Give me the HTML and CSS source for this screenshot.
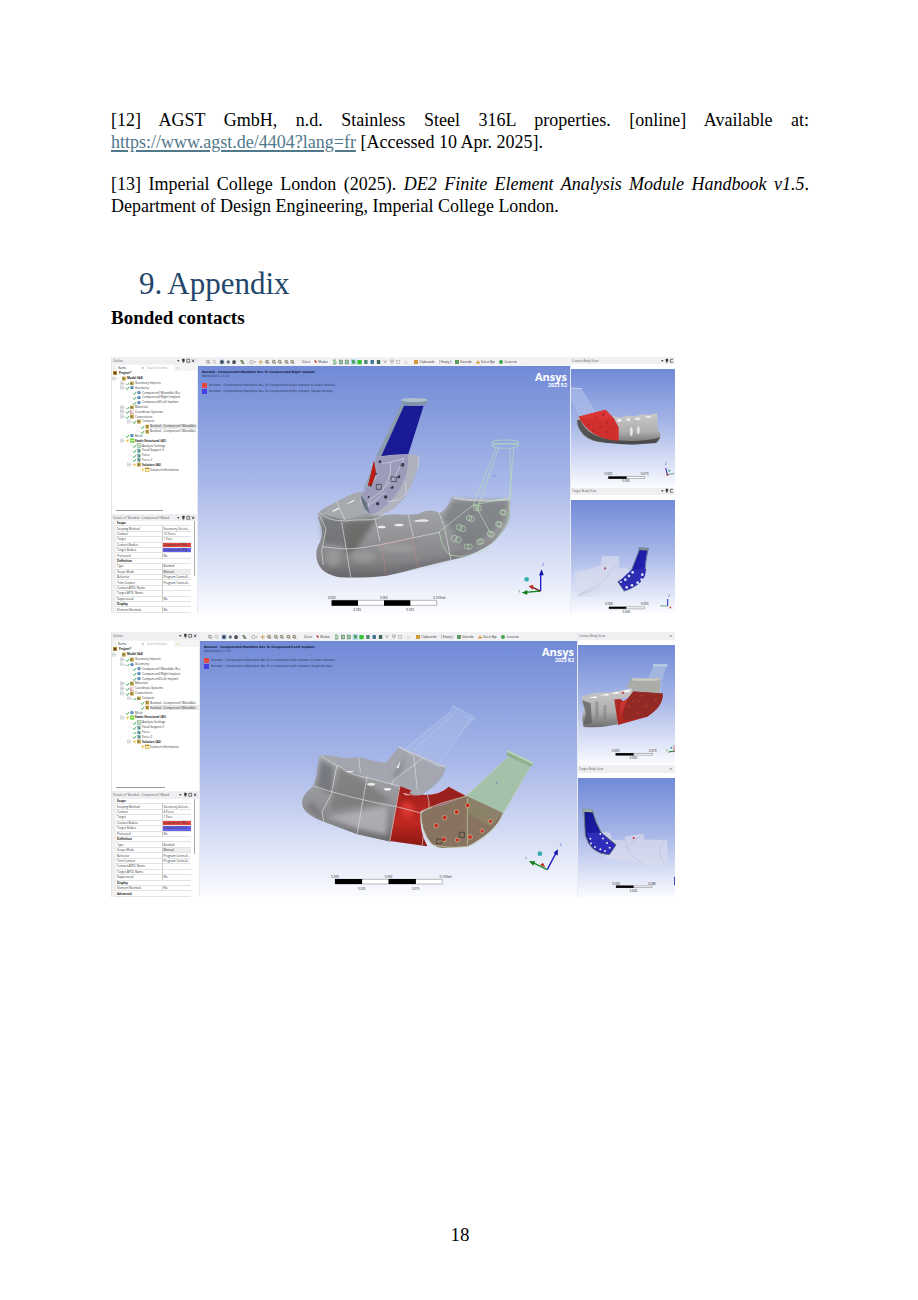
FILE: index.html
```html
<!DOCTYPE html>
<html lang="en">
<head>
<meta charset="utf-8">
<title>Appendix</title>
<link rel="stylesheet" href="styles.css">
</head>
<body>
<svg class="defs" aria-hidden="true">
  <defs>
    <linearGradient id="bone" x1="0" y1="0" x2="0" y2="1"><stop offset="0" stop-color="#a9abb0"/><stop offset=".45" stop-color="#97989b"/><stop offset=".8" stop-color="#858588"/><stop offset="1" stop-color="#68686b"/></linearGradient>
    <linearGradient id="boneLight" x1="0" y1="0" x2="0" y2="1"><stop offset="0" stop-color="#c9cac9"/><stop offset=".6" stop-color="#adadad"/><stop offset="1" stop-color="#6e6e6e"/></linearGradient>
    <linearGradient id="red" x1="0" y1="0" x2="0" y2="1"><stop offset="0" stop-color="#9d1f1b"/><stop offset=".6" stop-color="#c02822"/><stop offset="1" stop-color="#8a1713"/></linearGradient>
    <linearGradient id="blue" x1="0" y1="0" x2="1" y2="1"><stop offset="0" stop-color="#15158c"/><stop offset="1" stop-color="#2626c4"/></linearGradient>
    <filter id="soft" x="-50%" y="-50%" width="200%" height="200%"><feGaussianBlur stdDeviation="7"/></filter>
    <filter id="glow" x="-50%" y="-50%" width="200%" height="200%"><feGaussianBlur stdDeviation="2"/></filter>
    <symbol id="plus" viewBox="0 0 15 5" overflow="visible"><path d="M4 2.5h3M2 -1v2M2 4v2" stroke="#ccc" stroke-width=".4"/><rect x=".6" y="1" width="3" height="3" fill="#fff" stroke="#a5abb2" stroke-width=".4"/><path d="M1.2 2.5h1.8M2.1 1.6v1.8" stroke="#777" stroke-width=".4"/></symbol>
    <symbol id="minus" viewBox="0 0 15 5" overflow="visible"><path d="M4 2.5h3M2 -1v2M2 4v2" stroke="#ccc" stroke-width=".4"/><rect x=".6" y="1" width="3" height="3" fill="#fff" stroke="#a5abb2" stroke-width=".4"/><path d="M1.2 2.5h1.8" stroke="#777" stroke-width=".4"/></symbol>
    <symbol id="check" viewBox="0 0 15 5" overflow="visible"><path d="M2 -1v3.500h3" fill="none" stroke="#d5d5d5" stroke-width=".3"/><path d="M6 3.300l1.200 1.200 2-2.600" fill="none" stroke="#2fa44a" stroke-width=".9"/></symbol>
    <symbol id="bolt" viewBox="0 0 15 5"><path d="M8.300 .8L6.200 3h1.400L7 5l2.300-2.600H8z" fill="#f0b51f"/></symbol>
    <symbol id="box" viewBox="0 0 15 5"><rect x="10" y=".6" width="4" height="4" fill="#c9a94f"/><path d="M10.800 1.400h2v2.200h-2z" fill="#6c7746"/><path d="M13 .6v4" stroke="#f1d38a" stroke-width=".6"/></symbol>
    <symbol id="solid" viewBox="0 0 15 5"><circle cx="12" cy="2.500" r="1.700" fill="#4b83b3"/><path d="M11 2h2" stroke="#b5d2ea" stroke-width=".6"/></symbol>
    <symbol id="axes" viewBox="0 0 15 5"><path d="M10.300 .8v3.500h3.600M10.500 4l3-3" fill="none" stroke="#b04c6b" stroke-width=".6"/></symbol>
    <symbol id="contact" viewBox="0 0 15 5"><rect x="10.500" y=".6" width="3.500" height="4" fill="#e7bd50"/><path d="M10.800 1l2.800 3.200M13.600 1l-2.800 3.200" stroke="#47402a" stroke-width=".6"/></symbol>
    <symbol id="static" viewBox="0 0 15 5"><rect x="10" y=".5" width="4.400" height="4.200" fill="#72d63d"/><path d="M10.500 2.500h3.400" stroke="#e9ffdd" stroke-width=".8"/></symbol>
    <symbol id="load" viewBox="0 0 15 5"><rect x="10.200" y=".7" width="3.600" height="3.800" fill="#9cc9b2"/><path d="M10.500 1l2 2.400M12.500 2v2h-1.600" fill="none" stroke="#2f5c86" stroke-width=".7"/></symbol>
    <symbol id="gear" viewBox="0 0 15 5"><rect x="10.200" y=".7" width="3.800" height="3.800" fill="#edf6ed" stroke="#6a9c76" stroke-width=".5"/><path d="M10.200 2.600h3.800M12.100 .7v3.800" stroke="#6a9c76" stroke-width=".4"/></symbol>
    <symbol id="info" viewBox="0 0 15 5"><rect x="10.200" y=".9" width="3.800" height="3.600" fill="#fff3bf" stroke="#c59b22" stroke-width=".6"/><path d="M10.200 1.500h3.800" stroke="#8e6a0e" stroke-width=".7"/></symbol>
    <symbol id="winctl" viewBox="0 0 18 6"><path d="M0 2.300h2.600L1.300 3.800z" fill="#222"/><path d="M5.500 1h1.800v2.400h-1.800zM6.400 3.400v1.800" fill="#444" stroke="#222" stroke-width=".5"/><path d="M9.800 1.300h2.800v3h-2.800z" fill="none" stroke="#222" stroke-width=".6"/><path d="M15 1.500l2.300 2.600M17.300 1.500L15 4.100" stroke="#222" stroke-width=".7"/></symbol>
    <symbol id="pinctl" viewBox="0 0 12 6"><path d="M0 2.300h2.600L1.300 3.800z" fill="#222"/><path d="M5 1h1.800v2.400h-1.800zM5.900 3.400v1.800" fill="#444" stroke="#222" stroke-width=".5"/><path d="M12 1.300H9.500v3H12" fill="none" stroke="#222" stroke-width=".6"/></symbol>
    <symbol id="strip1" viewBox="0 0 96 6">
      <g fill="none" stroke="#66615b" stroke-width=".7"><circle cx="3" cy="2.600" r="1.500"/><path d="M4 3.600l1.300 1.300"/><circle cx="9.500" cy="2.600" r="1.500" stroke="#aaa"/><path d="M10.500 3.600l1.300 1.300" stroke="#aaa"/></g>
      <rect x="14.500" y="0" width="6" height="6" fill="#cfe2f5"/><circle cx="17.500" cy="3" r="2" fill="#3d4b5e"/><circle cx="24" cy="3" r="1.700" fill="#68717b"/><path d="M28 2l2-1 2 1-.5 3h-3z" fill="#4d5258"/><path d="M36 1h3l2 4h-3z" fill="#7f9c8d"/><path d="M37 2l3 2" stroke="#a06e27" stroke-width=".7"/><path d="M34 0v6M44 0v6" stroke="#ccc" stroke-width=".3"/>
      <circle cx="48" cy="3" r="1.800" fill="none" stroke="#888" stroke-width=".6"/><path d="M51 3h1" stroke="#555"/><path d="M57.500 .8v4.400M55.300 3h4.400" stroke="#c49b3a" stroke-width=".8"/>
      <g fill="#dcd3b9" stroke="#5b5549" stroke-width=".7"><circle cx="64" cy="2.700" r="1.500"/><circle cx="71" cy="2.700" r="1.500"/><circle cx="77" cy="2.700" r="1.500"/><circle cx="84" cy="2.700" r="1.500"/><circle cx="90" cy="2.700" r="1.500"/><path d="M65 3.700l1.200 1.300M72 3.700l1.200 1.300M78 3.700l1.200 1.300M85 3.700l1.200 1.300M91 3.700l1.200 1.300"/></g>
    </symbol>
    <symbol id="strip2" viewBox="0 0 80 6">
      <path d="M1 1h3M1 5h3M2 1v4M4 2v3" stroke="#489b5a" stroke-width=".8"/>
      <g fill="#9dc6a5" stroke="#4b6f59" stroke-width=".5"><rect x="7.500" y="1" width="3.500" height="4"/><rect x="13.500" y="1" width="3.500" height="4"/></g>
      <rect x="19" y="0" width="6" height="6" fill="#b9dcf1"/><path d="M20 1h3l1 3-3 1z" fill="#50a165"/><rect x="26" y="1" width="4.500" height="4.300" fill="#31c332"/>
      <rect x="33" y="1" width="3.500" height="4" fill="#4f8772"/><rect x="39.500" y="1" width="3.500" height="4" fill="#3f7092"/><rect x="46" y="1" width="3.500" height="4" fill="#3c6955"/>
      <path d="M53 1l1.500 3L56 1M60 1h3v2h-3zM61.500 3v2" fill="none" stroke="#999" stroke-width=".7"/><rect x="66" y="1.500" width="3.500" height="3" fill="none" stroke="#aaa" stroke-width=".6"/><path d="M74 4h4M75 3l2-1" stroke="#bbb" stroke-width=".6"/>
    </symbol>
  </defs>
</svg>

<main class="page">
  <section class="references">
    <p class="spread">[12] AGST GmbH, n.d. Stainless Steel 316L properties. [online] Available at:</p>
    <p><a href="https://www.agst.de/4404?lang=fr">https://www.agst.de/4404?lang=fr</a> [Accessed 10 Apr. 2025].</p>
    <p class="entry">[13] Imperial College London (2025). <em>DE2 Finite Element Analysis Module Handbook v1.5</em>. Department of Design Engineering, Imperial College London.</p>
  </section>

  <h1><span>9.</span><span>Appendix</span></h1>
  <h2>Bonded contacts</h2>

  <figure class="shot shot-right">
    <aside class="side">
      <header class="bar"><span>Outline</span><svg class="winctl"><use href="#winctl"/></svg></header>
      <div class="search"><select aria-label="Filter"><option>Name</option></select><span class="caret">▾</span><input aria-label="Search outline" placeholder="Search Outline"><span class="funnel">▾ .</span></div>
      <ul class="tree">
        <li class="root"><svg class="ti0"><rect x="1" y="0" width="4" height="4" fill="#b6862d"/><rect x="2" y="1" width="2" height="2" fill="#5d4a22"/></svg><b>Project*</b></li>
        <li><svg class="ti"><use href="#minus"/><use href="#box"/></svg><b>Model (A4)</b></li>
        <li class="d2"><svg class="ti"><use href="#plus"/><use href="#check"/><use href="#box"/></svg>Geometry Imports</li>
        <li class="d2"><svg class="ti"><use href="#minus"/><use href="#check"/><use href="#solid"/></svg>Geometry</li>
        <li class="d3"><svg class="ti"><use href="#check"/><use href="#solid"/></svg>Component1\Mandible Res</li>
        <li class="d3"><svg class="ti"><use href="#check"/><use href="#solid"/></svg>Component2\Right Implant</li>
        <li class="d3"><svg class="ti"><use href="#check"/><use href="#solid"/></svg>Component3\Left Implant</li>
        <li class="d2"><svg class="ti"><use href="#plus"/><use href="#check"/><use href="#box"/></svg>Materials</li>
        <li class="d2"><svg class="ti"><use href="#plus"/><use href="#check"/><use href="#axes"/></svg>Coordinate Systems</li>
        <li class="d2"><svg class="ti"><use href="#minus"/><use href="#check"/><use href="#box"/></svg>Connections</li>
        <li class="d3"><svg class="ti"><use href="#minus"/><use href="#check"/><use href="#box"/></svg>Contacts</li>
        <li class="d4 picked"><svg class="ti"><use href="#check"/><use href="#contact"/></svg>Bonded - Component1\Mandible</li>
        <li class="d4"><svg class="ti"><use href="#check"/><use href="#contact"/></svg>Bonded - Component1\Mandible</li>
        <li class="d2"><svg class="ti"><use href="#check"/><use href="#solid"/></svg>Mesh</li>
        <li class="d2"><svg class="ti"><use href="#minus"/><use href="#bolt"/><use href="#static"/></svg><b>Static Structural (A5)</b></li>
        <li class="d3"><svg class="ti"><use href="#check"/><use href="#gear"/></svg>Analysis Settings</li>
        <li class="d3"><svg class="ti"><use href="#check"/><use href="#load"/></svg>Fixed Support 2</li>
        <li class="d3"><svg class="ti"><use href="#check"/><use href="#load"/></svg>Force</li>
        <li class="d3"><svg class="ti"><use href="#check"/><use href="#load"/></svg>Force 2</li>
        <li class="d3"><svg class="ti"><use href="#minus"/><use href="#bolt"/><use href="#box"/></svg><b>Solution (A6)</b></li>
        <li class="d4"><svg class="ti"><use href="#bolt"/><use href="#info"/></svg>Solution Information</li>
      </ul>
      <div class="scroll"></div>
      <header class="bar"><span>Details of "Bonded - Component1\Mand</span><svg class="winctl"><use href="#winctl"/></svg></header>
      <div class="details">
        <table>
          <colgroup><col class="label"><col></colgroup>
          <tr><th colspan="2">Scope</th></tr>
          <tr><td>Scoping Method</td><td>Geometry Selecti...</td></tr>
          <tr><td>Contact</td><td>12 Faces</td></tr>
          <tr><td>Target</td><td>1 Face</td></tr>
          <tr><td>Contact Bodies</td><td class="hot">Component1\Ma...</td></tr>
          <tr><td>Target Bodies</td><td class="cold">Component2\Rig...</td></tr>
          <tr><td>Protected</td><td>No</td></tr>
          <tr><th colspan="2">Definition</th></tr>
          <tr><td>Type</td><td>Bonded</td></tr>
          <tr><td>Scope Mode</td><td class="dim">Manual</td></tr>
          <tr><td>Behavior</td><td>Program Controll...</td></tr>
          <tr><td>Trim Contact</td><td>Program Controll...</td></tr>
          <tr><td>Contact APDL Name</td><td></td></tr>
          <tr><td>Target APDL Name</td><td></td></tr>
          <tr><td>Suppressed</td><td>No</td></tr>
          <tr><th colspan="2">Display</th></tr>
          <tr><td>Element Normals</td><td>No</td></tr>
        </table>
        <div class="thumb"></div>
      </div>
    </aside>

    <div class="centre">
      <div class="tools"><svg class="strip1"><use href="#strip1"/></svg><button>Select</button><button><i class="arrow"></i>Mode▾</button><svg class="strip2"><use href="#strip2"/></svg><button><i class="clip"></i>Clipboard▾</button><button>[ Empty ]</button><button><i class="ext"></i>Extend▾</button><button><i class="sel"></i>Select By▾</button><button><i class="conv"></i>Convert▾</button><span>.</span></div>
      <div class="view">
        <svg class="scene" viewBox="198 366 372 247" preserveAspectRatio="none">
          <g transform="translate(300 385) scale(.33333)">
            <path d="M55 385C50 400 65 420 66 440C68 470 48 480 49 510C50 545 70 565 110 575C150 580 210 578 260 572C330 558 400 535 453 525C510 515 560 490 590 462C615 435 630 410 630 385L629 340C580 345 500 345 458 334C448 355 440 375 418 385C400 372 375 375 360 385C330 395 290 382 245 392L205 385L182 350L190 320C160 320 140 335 120 345C90 360 60 375 55 385Z" fill="url(#bone)"/>
            <g filter="url(#soft)"><path d="M72 550C150 575 270 565 450 520L580 460L450 515L250 560L150 565Z" fill="#5b5b5e" opacity=".65"/><path d="M62 395L125 400L135 480L70 475Z" fill="#606267" opacity=".6"/><path d="M130 410L230 400L170 490L135 510Z" fill="#5e5d57" opacity=".7"/><ellipse cx="100" cy="520" rx="22" ry="26" fill="#b2b2b2" opacity=".4"/><ellipse cx="190" cy="515" rx="35" ry="18" fill="#afafaf" opacity=".4"/><ellipse cx="290" cy="490" rx="60" ry="12" fill="#b3b3b3" opacity=".4"/><path d="M430 400L460 345L625 345L610 410L500 500Z" fill="#727478" opacity=".6"/></g>
            <path d="M65 385C95 360 135 330 190 324L182 350L205 385L135 405Z" fill="#a6a9ad"/>
            <g fill="#fff" filter="url(#glow)" opacity=".8"><path d="M140 356l25-14-5 8-20 8zM95 378l20-10 5 3-20 9z"/><ellipse cx="245" cy="426" rx="12" ry="4"/><ellipse cx="297" cy="420" rx="14" ry="4"/><path d="M340 408q28-10 48-2l-8 4h-34zM180 350l8-16-2 18z"/></g>
            <path d="M58 382C90 410 110 405 135 408C180 400 230 412 245 392M66 485L135 492C220 490 320 460 420 442M125 412L140 500L152 577M58 390L78 430L65 500L70 540M225 400L240 470M325 390L340 455M418 385C425 405 436 430 438 450L453 525M110 350L135 405" fill="none" stroke="#dedede" stroke-width="2"/>
            <path d="M240 480L335 458L355 548M245 480L258 570" fill="none" stroke="#e08b88" stroke-width="2" stroke-dasharray="4 3"/>
            <path d="M458 334C500 345 590 346 629 338L629 346C580 352 500 350 462 342Z" fill="#c4c7cc"/>
            <path d="M305 58L316 64L243 215L228 215Z" fill="#8d9cac"/>
            <path d="M312 62L371 62L325 207L243 215Z" fill="#1a1a95"/>
            <path d="M228 215L190 312L205 318L230 250L243 215Z" fill="#9aabbd"/>
            <path d="M222 228L228 265L216 300L204 302Z" fill="#b81e18"/>
            <path d="M228 217C270 208 320 204 357 212C357 240 350 270 318 332C290 370 250 398 210 390C185 378 178 350 183 330L205 310L228 270Z" fill="#b0b1bb" opacity=".94"/>
            <path d="M228 217L325 206C325 230 325 280 290 325C262 362 233 388 210 388C185 378 178 350 190 320L230 280Z" fill="#8f8cb8" opacity=".6"/>
            <path d="M222 228L228 265L216 300L204 302Z" fill="#b81e18"/>
            <path d="M247 235L271 232Q275 260 265 285L245 320L212 342L203 365Q215 355 255 322M271 232L313 220L302 240L285 275L258 305M315 290L320 325L295 345L260 350M182 350L205 385M357 212L354 250" fill="none" stroke="#d7d8e6" stroke-width="2"/>
            <path d="M183 330Q183 365 210 388L200 355Z" fill="#65767c"/>
            <g fill="#333846"><circle cx="307" cy="239" r="6"/><circle cx="296" cy="275" r="5"/><circle cx="276" cy="307" r="5"/><circle cx="257" cy="336" r="5"/><circle cx="233" cy="356" r="5"/><circle cx="206" cy="336" r="3"/><circle cx="240" cy="230" r="4"/><circle cx="228" cy="266" r="3"/><circle cx="212" cy="302" r="3"/></g>
            <g fill="#b7badb"><circle cx="304" cy="237" r="2"/><circle cx="293" cy="273" r="2"/><circle cx="273" cy="305" r="2"/></g>
            <path d="M229 298h15v15h-15zM273 276h16v14h-16z" fill="none" stroke="#333" stroke-width="2"/>
            <path d="M303 45Q340 34 383 43L379 57Q345 68 307 58Z" fill="#8094aa"/><ellipse cx="343" cy="45" rx="40" ry="6" fill="#aebfd0"/>
            <g fill="none" stroke="#b9deb6" stroke-width="2"><path d="M588 188L520 360L418 440Q425 490 450 510Q510 525 565 488Q620 435 628 385L628 338L642 188M520 360L532 372L572 445M595 190L533 370M630 190L633 345M520 360L628 338M577 170v15M655 170v15"/><ellipse cx="616" cy="171" rx="39" ry="6"/><ellipse cx="616" cy="183" rx="39" ry="7"/><circle cx="529" cy="369" r="8"/><circle cx="537" cy="370" r="8"/><circle cx="507" cy="399" r="8"/><circle cx="515" cy="402" r="8"/><circle cx="478" cy="427" r="9"/><circle cx="488" cy="431" r="9"/><circle cx="463" cy="460" r="9"/><circle cx="475" cy="464" r="9"/><circle cx="500" cy="485" r="8"/><circle cx="509" cy="485" r="8"/><circle cx="538" cy="471" r="8"/><circle cx="544" cy="469" r="8"/><circle cx="570" cy="446" r="8"/><circle cx="575" cy="449" r="8"/><circle cx="595" cy="417" r="8"/><circle cx="599" cy="419" r="8"/><circle cx="607" cy="382" r="8"/><circle cx="612" cy="383" r="8"/></g>
            <path d="M583 268v8M579 272h8" stroke="#6c76d7" stroke-width="1"/>
            <path d="M722 618V568" stroke="#1b1bc8" stroke-width="4"/><path d="M717 571L725 553L731 571Z" fill="#1212b0"/><path d="M722 618L676 622" stroke="#168a21" stroke-width="4"/><path d="M682 615L665 623L682 629Z" fill="#117b18"/><path d="M721 618L698 607" stroke="#6b1512" stroke-width="4"/><path d="M686 603L700 600L698 614Z" fill="#c22019"/><circle cx="680" cy="583" r="7" fill="#36aeb1"/>
            <path d="M95 646H410V661H95Z" fill="#fff" stroke="#333"/><path d="M95 646h79v16H95zM252 646h79v16h-79z"/>
            <g class="ticks"><text x="95" y="643">0.000</text><text x="252" y="643">0.050</text><text x="418" y="643">0.100(m)</text><text x="172" y="679">0.025</text><text x="331" y="679">0.075</text><text x="729" y="543" fill="#4545dd">Z</text><text x="658" y="625" fill="#1b861d">Y</text></g>
          </g>
        </svg>
        <div class="caption"><b>Bonded - Component1\Mandible Res To Component2\Right Implant</b><span>06/06/2025 17:24</span></div>
        <div class="legend"><span><i class="hot"></i>Bonded - Component1\Mandible Res To Component2\Right Implant (Contact Bodies)</span><span><i class="cold"></i>Bonded - Component1\Mandible Res To Component2\Right Implant (Target Bodies)</span></div>
        <div class="brand"><strong>Ansys</strong><b>2023 R2</b></div>
      </div>
    </div>

    <div class="bodies">
      <header class="bar"><span>Contact Body View</span><svg class="pinctl"><use href="#pinctl"/></svg></header>
      <div class="view">
        <svg class="scene" viewBox="571 369 104 118" preserveAspectRatio="none"><g transform="translate(566 352) scale(.33333)">
          <path d="M15 108L48 112L90 180L40 194L15 145Z" fill="#adbfe9" opacity=".65"/><path d="M15 108L48 110" stroke="#c5d5f0" stroke-width="3"/>
          <path d="M35 200C30 235 60 270 110 268L170 276L270 272C285 265 288 240 275 235L274 183L250 188L225 187L205 193L185 190L165 196L143 192L40 195Z" fill="url(#boneLight)"/><path d="M33 203C35 245 70 265 120 272L200 277L270 272L283 255Q220 272 150 263Q65 258 43 202Z" fill="#404040" opacity=".8" filter="url(#glow)"/>
          <g fill="#f5f5f5" filter="url(#glow)" opacity=".8"><ellipse cx="160" cy="204" rx="7" ry="5"/><ellipse cx="187" cy="202" rx="6" ry="5"/><ellipse cx="215" cy="200" rx="8" ry="4"/><ellipse cx="247" cy="194" rx="9" ry="3"/><ellipse cx="196" cy="238" rx="4" ry="14"/><ellipse cx="217" cy="234" rx="4" ry="12"/></g>
          <path d="M38 194L119 173Q128 193 143 197L158 226L158 266Q70 260 38 194Z" fill="#cf2f2d"/><path d="M39 193L119 173L141 195Q110 210 38 194Z" fill="#d83533"/><g fill="#b02427"><circle cx="112" cy="187" r="4"/><circle cx="88" cy="196" r="3"/><circle cx="124" cy="211" r="3"/><circle cx="68" cy="218" r="3"/><circle cx="104" cy="224" r="3"/><circle cx="82" cy="236" r="3"/><circle cx="123" cy="240" r="3"/><circle cx="142" cy="228" r="3"/></g>
          <path d="M127 372H236V378H127Z" fill="#fff" stroke="#333"/><path d="M127 372h55v7h-55z"/><g class="ticks"><text x="127" y="369">0.000</text><text x="236" y="369">0.070</text><text x="180" y="389">0.035</text><text x="299" y="339" fill="#4545dd">Z</text></g>
          <path d="M304 366L299 347" stroke="#2424b8" stroke-width="3"/><path d="M304 367L325 363" stroke="#397b6d" stroke-width="2"/><circle cx="304" cy="367" r="3" fill="#b33"/><circle cx="310" cy="355" r="3" fill="#2b9f9c"/>
        </g></svg>
      </div>
      <header class="bar"><span>Target Body View</span><svg class="pinctl"><use href="#pinctl"/></svg></header>
      <div class="view">
        <svg class="scene" viewBox="571 500 104 113" preserveAspectRatio="none"><g transform="translate(566 352) scale(.33333)">
          <path d="M27 660L60 653L103 640L108 612L158 611Q165 630 155 650L180 646L190 655L175 700L90 730Q45 740 28 720Z" fill="#d9ddec" opacity=".7"/><path d="M158 630L108 690L35 730Q70 720 105 700" fill="none" stroke="#bcc3d3" stroke-width="2"/>
          <path d="M221 590L246 592Q238 630 237 660Q225 700 175 716L156 688L190 670Z" fill="url(#blue)" stroke="#6e8099" stroke-width="3"/><path d="M195 654Q220 647 240 650L237 670Q225 700 175 714L157 689Z" fill="#2d2db4"/><path d="M219 586L248 588L246 595L220 593Z" fill="#829098" stroke="#4d5962"/>
          <g fill="#e1e3fa"><circle cx="200" cy="660" r="4"/><circle cx="229" cy="667" r="4"/><circle cx="189" cy="671" r="4"/><circle cx="178" cy="682" r="4"/><circle cx="227" cy="682" r="4"/><circle cx="215" cy="691" r="4"/><circle cx="198" cy="699" r="4"/><circle cx="182" cy="705" r="4"/><circle cx="165" cy="689" r="3"/></g><path d="M115 646h5v5h-5z" fill="#9d3446"/>
          <path d="M129 763H236V769H129Z" fill="#fff" stroke="#333"/><path d="M129 763h52v6h-52z"/><g class="ticks"><text x="129" y="759">0.000</text><text x="236" y="759">0.090</text><text x="181" y="781">0.045</text><text x="309" y="735" fill="#4545dd">Z</text></g><path d="M305 761V740" stroke="#2424b8" stroke-width="3"/><path d="M305 761L283 760" stroke="#287847" stroke-width="2"/><circle cx="313" cy="765" r="3" fill="#d44"/>
        </g></svg>
      </div>
    </div>
  </figure>

  <figure class="shot shot-left">
    <aside class="side">
      <header class="bar"><span>Outline</span><svg class="winctl"><use href="#winctl"/></svg></header>
      <div class="search"><select aria-label="Filter"><option>Name</option></select><span class="caret">▾</span><input aria-label="Search outline" placeholder="Search Outline"><span class="funnel">▾ .</span></div>
      <ul class="tree">
        <li class="root"><svg class="ti0"><rect x="1" y="0" width="4" height="4" fill="#b6862d"/><rect x="2" y="1" width="2" height="2" fill="#5d4a22"/></svg><b>Project*</b></li>
        <li><svg class="ti"><use href="#minus"/><use href="#box"/></svg><b>Model (A4)</b></li>
        <li class="d2"><svg class="ti"><use href="#plus"/><use href="#check"/><use href="#box"/></svg>Geometry Imports</li>
        <li class="d2"><svg class="ti"><use href="#minus"/><use href="#check"/><use href="#solid"/></svg>Geometry</li>
        <li class="d3"><svg class="ti"><use href="#check"/><use href="#solid"/></svg>Component1\Mandible Res</li>
        <li class="d3"><svg class="ti"><use href="#check"/><use href="#solid"/></svg>Component2\Right Implant</li>
        <li class="d3"><svg class="ti"><use href="#check"/><use href="#solid"/></svg>Component3\Left Implant</li>
        <li class="d2"><svg class="ti"><use href="#plus"/><use href="#check"/><use href="#box"/></svg>Materials</li>
        <li class="d2"><svg class="ti"><use href="#plus"/><use href="#check"/><use href="#axes"/></svg>Coordinate Systems</li>
        <li class="d2"><svg class="ti"><use href="#minus"/><use href="#check"/><use href="#box"/></svg>Connections</li>
        <li class="d3"><svg class="ti"><use href="#minus"/><use href="#check"/><use href="#box"/></svg>Contacts</li>
        <li class="d4"><svg class="ti"><use href="#check"/><use href="#contact"/></svg>Bonded - Component1\Mandible</li>
        <li class="d4 picked"><svg class="ti"><use href="#check"/><use href="#contact"/></svg>Bonded - Component1\Mandible</li>
        <li class="d2"><svg class="ti"><use href="#check"/><use href="#solid"/></svg>Mesh</li>
        <li class="d2"><svg class="ti"><use href="#minus"/><use href="#bolt"/><use href="#static"/></svg><b>Static Structural (A5)</b></li>
        <li class="d3"><svg class="ti"><use href="#check"/><use href="#gear"/></svg>Analysis Settings</li>
        <li class="d3"><svg class="ti"><use href="#check"/><use href="#load"/></svg>Fixed Support 2</li>
        <li class="d3"><svg class="ti"><use href="#check"/><use href="#load"/></svg>Force</li>
        <li class="d3"><svg class="ti"><use href="#check"/><use href="#load"/></svg>Force 2</li>
        <li class="d3"><svg class="ti"><use href="#minus"/><use href="#bolt"/><use href="#box"/></svg><b>Solution (A6)</b></li>
        <li class="d4"><svg class="ti"><use href="#bolt"/><use href="#info"/></svg>Solution Information</li>
      </ul>
      <div class="scroll"></div>
      <header class="bar"><span>Details of "Bonded - Component1\Mand</span><svg class="winctl"><use href="#winctl"/></svg></header>
      <div class="details">
        <table>
          <colgroup><col class="label"><col></colgroup>
          <tr><th colspan="2">Scope</th></tr>
          <tr><td>Scoping Method</td><td>Geometry Selecti...</td></tr>
          <tr><td>Contact</td><td>4 Faces</td></tr>
          <tr><td>Target</td><td>1 Face</td></tr>
          <tr><td>Contact Bodies</td><td class="hot">Component1\Ma...</td></tr>
          <tr><td>Target Bodies</td><td class="cold">Component3\Lef...</td></tr>
          <tr><td>Protected</td><td>No</td></tr>
          <tr><th colspan="2">Definition</th></tr>
          <tr><td>Type</td><td>Bonded</td></tr>
          <tr><td>Scope Mode</td><td class="dim">Manual</td></tr>
          <tr><td>Behavior</td><td>Program Controll...</td></tr>
          <tr><td>Trim Contact</td><td>Program Controll...</td></tr>
          <tr><td>Contact APDL Name</td><td></td></tr>
          <tr><td>Target APDL Name</td><td></td></tr>
          <tr><td>Suppressed</td><td>No</td></tr>
          <tr><th colspan="2">Display</th></tr>
          <tr><td>Element Normals</td><td>No</td></tr>
          <tr><th colspan="2">Advanced</th></tr>
        </table>
        <div class="thumb"></div>
      </div>
    </aside>

    <div class="centre">
      <div class="tools"><svg class="strip1"><use href="#strip1"/></svg><button>Select</button><button><i class="arrow"></i>Mode▾</button><svg class="strip2"><use href="#strip2"/></svg><button><i class="clip"></i>Clipboard▾</button><button>[ Empty ]</button><button><i class="ext"></i>Extend▾</button><button><i class="sel"></i>Select By▾</button><button><i class="conv"></i>Convert▾</button><span>.</span></div>
      <div class="view">
        <svg class="scene" viewBox="200 641 376 256" preserveAspectRatio="none">
          <g transform="translate(290 695) scale(.33333)">
            <path d="M482 48L345 160L440 200L550 72Z" fill="#a9b9e6" opacity=".5"/><path d="M482 48L345 160M492 54L370 165M540 72L445 205M485 32L557 68M480 42L550 76M484 36L554 72" stroke="#b4cbed" stroke-width="2"/>
            <path d="M325 156L466 217Q455 262 400 295L310 270L285 205Z" fill="#a4a7b0"/><path d="M325 156L466 217L440 215L370 180Z" fill="#b4b9c5"/>
            <path d="M85 185Q110 175 160 190L210 187Q250 200 290 204L325 158L355 172L310 240L300 270L180 245L120 220Z" fill="#a3a6ae"/>
            <path d="M92 180C75 195 90 250 62 280C20 315 25 350 95 378L200 418L300 440L328 275L260 258L180 240L150 210L120 190Z" fill="url(#bone)"/>
            <g filter="url(#soft)"><path d="M92 195L130 215L125 300L80 275Z" fill="#666970" opacity=".7"/><path d="M145 220L205 245L305 320L120 345Z" fill="#757574" opacity=".7"/><path d="M110 365L290 335L288 420L200 400Z" fill="#babbc0" opacity=".7"/><path d="M50 335L95 370L90 355L65 320Z" fill="#5d5f65" opacity=".5"/><path d="M305 240L345 185L340 215L320 250Z" fill="#6e7178" opacity=".5"/></g>
            <g fill="#fff" filter="url(#glow)" opacity=".85"><ellipse cx="242" cy="268" rx="12" ry="4"/><ellipse cx="291" cy="283" rx="11" ry="4"/><ellipse cx="178" cy="230" rx="12" ry="2"/><path d="M317 220l12-22-4 20z"/></g>
            <path d="M327 273Q360 285 400 300Q450 300 474 275L526 303L450 325L390 350Q385 405 410 454L298 438Z" fill="url(#red)"/><ellipse cx="350" cy="345" rx="20" ry="26" fill="#d8362d" filter="url(#soft)"/><path d="M336 293l28 6 28-7-8 9h-40z" fill="#fff" opacity=".6" filter="url(#glow)"/><ellipse cx="380" cy="292" rx="22" ry="9" fill="#a7aab1"/><path d="M405 304Q450 305 474 278L522 306L425 340Z" fill="#8f201c" opacity=".6"/>
            <path d="M92 182Q130 210 150 215Q175 240 240 250L328 274M68 273Q180 310 318 335L395 355M140 210L122 300L95 350L100 380M230 245L215 330L200 418M328 275L298 438M205 188L210 232M410 300Q425 330 400 400L395 450M325 156L370 182L380 283M305 260L395 190M325 156L466 217" fill="none" stroke="#dcdcdc" stroke-width="2"/>
            <path d="M654 185L718 215L637 355L527 303Z" fill="#a4c2aa"/><path d="M527 303L637 355Q615 410 530 455L455 459Q400 455 391 360Q390 345 450 332Z" fill="#87735f"/><path d="M527 303L637 355L600 395L533 355Z" fill="#8b8169"/><path d="M654 185L527 303L450 325L392 348Q385 400 425 450Q500 465 550 448Q615 410 637 355L718 215M530 310V450" fill="none" stroke="#bfd0a6" stroke-width="2"/>
            <path d="M650 168L726 205L720 216L648 181Z" fill="#8eb28c"/><path d="M650 168L726 205" stroke="#b8d8b4" stroke-width="5"/>
            <g fill="#c52b22" stroke="#cfc398" stroke-width="2"><circle cx="437" cy="392" r="7"/><circle cx="462" cy="368" r="7"/><circle cx="498" cy="351" r="7"/><circle cx="531" cy="331" r="7"/><circle cx="599" cy="379" r="6"/><circle cx="574" cy="408" r="6"/><circle cx="538" cy="426" r="7"/><circle cx="500" cy="435" r="6"/><circle cx="460" cy="433" r="7"/></g><path d="M438 432h16v14h-16zM506 412h15v15h-15z" fill="none" stroke="#333" stroke-width="2"/><path d="M615 264h6M618 260v8" stroke="#728cb8" stroke-width="2"/>
            <path d="M769 524L796 472" stroke="#1b1bc8" stroke-width="4"/><path d="M788 473L801 463L800 482Z" fill="#1212b0"/><path d="M769 524L726 503" stroke="#168a21" stroke-width="4"/><path d="M714 498L733 499L727 512Z" fill="#117b18"/><path d="M748 510L756 503L763 517Z" fill="#c22019"/><circle cx="747" cy="476" r="7" fill="#36aeb1"/>
            <path d="M134 553H455V567H134Z" fill="#fff" stroke="#333"/><path d="M134 552h81v15h-81zM294 552h82v15h-82z"/><g class="ticks"><text x="134" y="550">0.000</text><text x="294" y="550">0.050</text><text x="465" y="550">0.100(m)</text><text x="214" y="584">0.025</text><text x="375" y="584">0.075</text><text x="809" y="454" fill="#4545dd">Z</text><text x="706" y="495" fill="#1b861d">Y</text></g>
          </g>
        </svg>
        <div class="caption"><b>Bonded - Component1\Mandible Res To Component3\Left Implant</b><span>06/06/2025 17:25</span></div>
        <div class="legend"><span><i class="hot"></i>Bonded - Component1\Mandible Res To Component3\Left Implant (Contact Bodies)</span><span><i class="cold"></i>Bonded - Component1\Mandible Res To Component3\Left Implant (Target Bodies)</span></div>
        <div class="brand"><strong>Ansys</strong><b>2023 R2</b></div>
      </div>
    </div>

    <div class="bodies">
      <header class="bar"><span>Contact Body View</span><span class="down">▾</span></header>
      <div class="view">
        <svg class="scene" viewBox="578 645 97 119" preserveAspectRatio="none"><g transform="translate(572 628) scale(.33333)">
          <path d="M245 115L282 116L270 160L264 198L225 155Z" fill="#a9bddd" opacity=".75"/><path d="M243 112H286" stroke="#b5cce1" stroke-width="8"/>
          <path d="M178 150L266 151L262 196L185 192L165 175Z" fill="#aaaca7"/><path d="M178 150L266 151L255 158H185Z" fill="#c9cbc5"/>
          <path d="M27 206Q70 190 110 194L180 180L182 202L130 215L137 288Q85 300 35 296L30 272L37 240Z" fill="url(#boneLight)"/>
          <g filter="url(#glow)"><path d="M30 216L56 225L60 285L34 290L42 253Z" fill="#5a5a5a" opacity=".7"/><path d="M70 220h9v50h-9zM95 230h8v45h-8z" fill="#7a7a7a" opacity=".5"/><path d="M50 208l25-4-4 6zM83 202l24-5 5 5zM116 197l20-6 8 5zM145 190l30-6-4 8z" fill="#fff"/></g>
          <path d="M127 214L145 212L158 222L184 190L272 196Q274 235 225 265L138 290Z" fill="#ad2723"/><path d="M184 190L272 196Q274 235 225 265L157 276Q145 235 184 190Z" fill="#922924"/><path d="M145 225L168 210L145 265Z" fill="#c8352f" filter="url(#glow)"/><g fill="#b83b35"><circle cx="209" cy="203" r="3"/><circle cx="185" cy="219" r="3"/><circle cx="170" cy="234" r="3"/><circle cx="201" cy="219" r="3"/><circle cx="222" cy="234" r="3"/><circle cx="251" cy="215" r="3"/><circle cx="197" cy="255" r="3"/></g><circle cx="153" cy="194" r="3" fill="#bf2626"/>
          <path d="M131 375H242V380H131Z" fill="#fff" stroke="#333"/><path d="M131 374h54v7h-54z"/><g class="ticks"><text x="131" y="371">0.000</text><text x="242" y="371">0.070</text><text x="184" y="391">0.035</text><text x="284" y="370" fill="#248a24">Y</text></g><path d="M309 368L289 371" stroke="#237b32" stroke-width="3"/><circle cx="298" cy="358" r="3" fill="#2b9f9c"/><path d="M306 350v20" stroke="#b24141" stroke-width="2"/>
        </g></svg>
      </div>
      <header class="bar"><span>Target Body View</span><span class="down">▾</span></header>
      <div class="view">
        <svg class="scene" viewBox="578 777 97 120" preserveAspectRatio="none"><g transform="translate(572 628) scale(.33333)">
          <path d="M85 610L115 612L119 632L160 635L157 624L217 614L215 632L285 634Q290 670 285 705Q240 715 210 702L105 690L85 650Z" fill="#d9dcec" opacity=".7"/><path d="M160 635Q165 680 210 702M217 614L160 655M275 634Q250 675 278 707" fill="none" stroke="#b9bed2" stroke-width="2"/>
          <path d="M36 548L62 548Q70 580 88 612L132 648L112 678Q55 675 40 620Z" fill="url(#blue)" stroke="#6b7d71" stroke-width="3"/><path d="M44 612L88 613L131 650L112 676Q60 670 44 612Z" fill="#2d2dba"/><path d="M31 541L62 542V550L32 549Z" fill="#a2b3a0" stroke="#5d735e"/><g fill="#e9e9f4"><circle cx="85" cy="616" r="3"/><circle cx="93" cy="629" r="3"/><circle cx="105" cy="643" r="3"/><circle cx="55" cy="630" r="3"/><circle cx="57" cy="644" r="3"/><circle cx="69" cy="655" r="3"/><circle cx="85" cy="662" r="3"/><circle cx="99" cy="667" r="3"/><circle cx="113" cy="657" r="3"/></g><circle cx="185" cy="628" r="3" fill="#d52525"/>
          <path d="M132 772H240V777H132Z" fill="#fff" stroke="#333"/><path d="M132 771h53v7h-53z"/><g class="ticks"><text x="132" y="768">0.000</text><text x="240" y="768">0.080</text><text x="184" y="789">0.040</text></g><path d="M308 770V745" stroke="#2424b8" stroke-width="3"/>
        </g></svg>
      </div>
    </div>
  </figure>
  <footer>18</footer>
</main>
</body>
</html>
```
FILE: styles.css
```css
* { box-sizing: border-box; }
body { margin: 0; background: #fff; color: #000; font-family: "Liberation Serif", "Times New Roman", serif; font-size: 19px; line-height: 22px; }
.defs { position: absolute; width: 0; height: 0; }
.page { display: flex; flex-direction: column; min-height: 100vh; padding: 109px 109px 54px 111px; }
p { margin: 0; }
.references { font-size: 18px; }
.spread { text-align: justify; text-align-last: justify; }
.entry { margin-top: 20px; text-align: justify; }
a { color: #52788c; text-decoration-thickness: 2px; text-underline-offset: 2px; }
h1 { display: flex; gap: 5px; margin: 49px 0 0; padding-left: 28px; color: #23466a; font-size: 31px; font-weight: 400; line-height: 36px; }
h2 { margin: 5px 0 0; font-size: 19px; line-height: 22px; }
footer { margin-top: auto; text-align: center; }

/* Software captures */
.shot { display: grid; grid-template-columns: 86px minmax(0, 1fr) 104px; column-gap: 1px; width: 564px; max-width: 100%; margin: 28px 0 0; overflow: hidden; background: #e9ebf2; color: #2c2f33; font-family: "Open Sans", sans-serif; font-size: 3px; line-height: 4px; }
.shot-right { height: 256px; }
.shot-left { grid-template-columns: 88px minmax(0, 1fr) 97px; height: 265px; margin-top: 19px; }
.side, .centre, .bodies { display: flex; flex-direction: column; min-width: 0; min-height: 0; }
.side { background: #fff; border-left: 1px solid #e4e4e4; }
.bodies { background: #fff; }
.bar { display: flex; flex: none; align-items: center; justify-content: space-between; height: 7px; padding: 0 2px 0 1px; background: #efeff1; color: #55585c; white-space: nowrap; }
.winctl { flex: none; width: 18px; height: 6px; }
.pinctl { flex: none; width: 12px; height: 6px; }
.search { display: flex; flex: none; align-items: center; height: 7px; padding-left: 5px; background: #f4f4f5; }
select, input, button { border: 0; margin: 0; padding: 0; background: none; color: inherit; font: inherit; appearance: none; }
select { width: 25px; height: 6px; padding-left: 1px; background: #fff; }
.caret { width: 4px; background: #fff; }
input { width: 28px; height: 6px; padding-left: 1px; background: #fff; }
input::placeholder { color: #a3a6aa; opacity: 1; }
.funnel { padding-left: 3px; color: #c79b37; }
.tree { display: grid; flex: none; grid-auto-rows: 1fr; height: 101px; margin: 0; padding: 0; list-style: none; }
.shot-left .tree { height: 102px; }
.tree li { display: flex; align-items: center; min-height: 0; overflow: hidden; white-space: nowrap; }
.tree b, th { color: #1d1f22; }
.tree .d2 { padding-left: 8px; }
.tree .d3 { padding-left: 15px; }
.tree .d4 { padding-left: 23px; }
.picked { background: linear-gradient(#e6e6e6, #e6e6e6) right / 47px 100% no-repeat; }
.ti { flex: none; width: 15px; height: 5px; overflow: visible; }
.ti0 { flex: none; width: 7px; height: 5px; }
.scroll { flex: 1; display: flex; align-items: flex-end; padding: 0 34px 3px 4px; }
.scroll::after { content: ""; width: 100%; height: 1px; background: #999; }
.details { display: flex; flex: none; gap: 3px; height: 92px; border-left: 4px solid #f0f0f0; }
.shot-left .details { height: 98px; }
table { width: 75px; height: 100%; border-collapse: collapse; table-layout: fixed; line-height: 4px; }
.label { width: 46px; }
th, td { padding: 0 0 0 1px; border: 1px solid #e2e2e2; border-width: 0 0 1px 0; overflow: hidden; text-align: left; white-space: nowrap; }
td:first-child { border-right: 1px solid #c8c8c8; }
.thumb { width: 1px; height: 55px; background: #aaa; }
.hot { background: #e8473f; }
.cold { background: #4440e4; }
td.cold { background: #6662ee; }
.dim { background: #ededeb; }

.tools { display: flex; flex: none; align-items: center; gap: 4px; height: 9px; padding-left: 7px; background: #f2f2f4; white-space: nowrap; }
.strip1, .strip2 { flex: none; height: 6px; }
.strip1 { width: 93px; }
.strip2 { width: 78px; }
.tools button { display: flex; flex: none; align-items: center; gap: 1px; }
.tools i { width: 4px; height: 4px; background: #5d9d64; }
.tools .arrow { width: 3px; background: #b43336; clip-path: polygon(0 0, 100% 60%, 60% 65%, 90% 100%, 20% 70%); }
.tools .clip { background: #d39b37; }
.tools .sel { background: #d5a144; clip-path: polygon(50% 0, 75% 60%, 100% 60%, 100% 100%, 0 100%, 0 60%, 30% 60%); }
.tools .conv { background: #3da648; border-radius: 2px; }
.view { position: relative; flex: 1; min-height: 0; background: linear-gradient(#718ad7, #a9b8e8 48%, #fbfcff); }
.scene { position: absolute; inset: 0; width: 100%; height: 100%; }
.caption, .legend { position: relative; display: flex; flex-direction: column; padding-left: 4px; color: #26345e; font-family: "DejaVu Sans", sans-serif; white-space: nowrap; }
.caption { padding-top: 4px; }
.caption b { color: #101a3c; }
.legend { padding-top: 4px; }
.legend span { display: flex; align-items: center; gap: 2px; height: 6px; }
.legend i { width: 5px; height: 5px; }
.brand { position: absolute; top: 5px; right: 3px; display: flex; flex-direction: column; align-items: flex-end; color: #fff; font-size: 5px; line-height: 5px; }
.brand strong { font-size: 11px; line-height: 12px; }
.ticks { fill: #222; font-size: 9px; text-anchor: middle; }
.bodies .view { margin-top: 5px; }
.shot-right .bodies .view:nth-of-type(1) { flex: 118; }
.shot-right .bodies .view:nth-of-type(2) { flex: 113; }
.shot-left .bar { height: 8px; }
.down { color: #222; padding-right: 1px; }
```
